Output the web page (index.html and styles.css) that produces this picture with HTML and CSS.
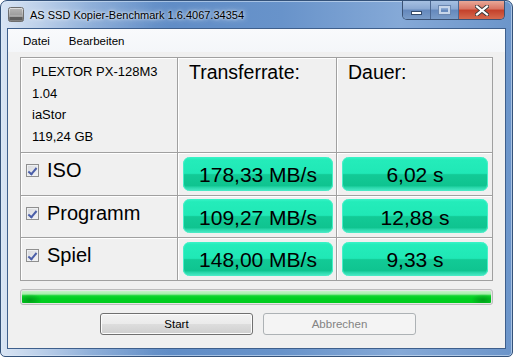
FILE: index.html
```html
<!DOCTYPE html>
<html>
<head>
<meta charset="utf-8">
<link rel="stylesheet" href="styles.css">
</head>
<body>
<div class="window">
  <div class="titlebar">
    <svg class="appicon" width="16" height="15" viewBox="0 0 16 15">
      <defs>
        <linearGradient id="hd" x1="0" y1="0" x2="0" y2="1">
          <stop offset="0" stop-color="#e4e4e4"/>
          <stop offset="0.6" stop-color="#a8a8a8"/>
          <stop offset="1" stop-color="#7a7a7a"/>
        </linearGradient>
      </defs>
      <rect x="0.5" y="0.5" width="15" height="14" rx="2" fill="url(#hd)" stroke="#6e6e6e"/>
      <path d="M3 2v6M5 2v6M7 2v6M9 2v6M11 2v6M13 2v6" stroke="#8c8c8c" stroke-width="1"/>
      <rect x="1.5" y="10" width="13" height="3" fill="#5e5e5e"/>
    </svg>
    <span class="title">AS SSD Kopier-Benchmark 1.6.4067.34354</span>
    <div class="caption">
      <div class="cbtn cmin"><span class="gmin"></span></div>
      <div class="cbtn cmax"><span class="gmax"></span></div>
      <div class="cbtn cclose">
        <svg width="14" height="11" viewBox="0 0 14 11">
          <path d="M2 1.5 L12 9.5 M12 1.5 L2 9.5" stroke="#3a3a3a" stroke-width="4" stroke-linecap="square"/>
          <path d="M2 1.5 L12 9.5 M12 1.5 L2 9.5" stroke="#ffffff" stroke-width="2.2" stroke-linecap="square"/>
        </svg>
      </div>
    </div>
  </div>
  <div class="client">
    <div class="menubar">
      <span class="menuitem">Datei</span>
      <span class="menuitem">Bearbeiten</span>
    </div>
    <div class="grid">
      <div class="cell info">
        <div>PLEXTOR PX-128M3</div>
        <div>1.04</div>
        <div>iaStor</div>
        <div>119,24 GB</div>
      </div>
      <div class="cell head">Transferrate:</div>
      <div class="cell head">Dauer:</div>

      <div class="cell label"><span class="cb"></span><span>ISO</span></div>
      <div class="cell val"><div class="pill">178,33 MB/s</div></div>
      <div class="cell val last"><div class="pill">6,02 s</div></div>

      <div class="cell label"><span class="cb"></span><span>Programm</span></div>
      <div class="cell val"><div class="pill">109,27 MB/s</div></div>
      <div class="cell val last"><div class="pill">12,88 s</div></div>

      <div class="cell label"><span class="cb"></span><span>Spiel</span></div>
      <div class="cell val"><div class="pill">148,00 MB/s</div></div>
      <div class="cell val last"><div class="pill">9,33 s</div></div>
    </div>
    <div class="progress"><div class="fill"></div></div>
    <div class="buttons">
      <div class="btn">Start</div>
      <div class="btn disabled">Abbrechen</div>
    </div>
  </div>
</div>
</body>
</html>
```
FILE: styles.css
```css
* { box-sizing: border-box; }
html, body { margin: 0; padding: 0; background: #ffffff; }
body { font-family: "Liberation Sans", Arial, sans-serif; }

.window {
  width: 513px;
  height: 357px;
  border: 1px solid #34527a;
  border-radius: 7px 7px 5px 5px;
  padding: 0 6px 7px 6px;
  display: flex;
  flex-direction: column;
  background:
    linear-gradient(to right, rgba(255,255,255,0.65) 0, rgba(255,255,255,0.2) 90px, rgba(255,255,255,0) 170px),
    linear-gradient(to right, #90b2de 0%, #5f8cc6 30%, #6893ca 55%, #85a9d7 78%, #6c95ca 100%);
  box-shadow: inset 0 0 0 1px rgba(220,235,250,0.55);
}

.titlebar {
  height: 27px;
  display: flex;
  align-items: center;
  position: relative;
}
.appicon { margin-left: 1px; flex: none; }
.title {
  margin-left: 6px;
  font-size: 11px;
  color: #000;
  text-shadow: 0 0 6px rgba(255,255,255,0.9), 0 0 3px rgba(255,255,255,0.9);
  white-space: nowrap;
}
.caption {
  position: absolute;
  right: 1px;
  top: 0;
  display: flex;
  height: 19px;
  border: 1px solid #3b5274;
  border-top: none;
  border-radius: 0 0 5px 5px;
  overflow: hidden;
}
.cbtn {
  height: 100%;
  display: flex;
  align-items: center;
  justify-content: center;
}
.cmin, .cmax {
  width: 28px;
  background: linear-gradient(to bottom, #a6c0e2 0%, #8aa8d2 45%, #6488bc 50%, #7a9cc8 100%);
  border-right: 1px solid #4c6892;
}
.cclose {
  width: 45px;
  background: linear-gradient(to bottom, #e8a898 0%, #d87462 45%, #c4402a 50%, #d66a4e 100%);
}
.gmin {
  width: 11px;
  height: 4px;
  margin-top: 5px;
  background: #fff;
  border: 1px solid #334a6a;
}
.gmax {
  width: 11px;
  height: 8px;
  border: 2px solid #c7d6ea;
  box-shadow: 0 0 0 1px #6b87b0;
}

.client {
  flex: 1;
  border: 1px solid #3e5f8c;
  background: #f0f0f0;
  display: flex;
  flex-direction: column;
}
.menubar {
  height: 23px;
  display: flex;
  align-items: center;
  padding-left: 15px;
  background: linear-gradient(to bottom, #f9fafc 0%, #f4f6f9 100%);
  font-size: 11.5px;
  color: #000;
}
.menuitem { margin-right: 19px; }

.grid {
  margin: 5px 12px 0 12px;
  display: grid;
  grid-template-columns: 157px 159px 156px;
  grid-template-rows: 95px 43px 42px 43px;
  border-top: 1px solid #a0a0a0;
  border-left: 1px solid #a0a0a0;
}
.cell {
  border-right: 1px solid #a0a0a0;
  border-bottom: 1px solid #a0a0a0;
  box-shadow: inset 1px 1px 0 #ffffff;
}
.info {
  padding: 3px 0 0 11px;
  font-size: 13px;
  line-height: 21.5px;
  color: #000;
}
.head {
  padding: 3px 0 0 11px;
  font-size: 19.5px;
  color: #000;
}
.label {
  display: flex;
  align-items: center;
  padding: 0 0 7px 5px;
  font-size: 20px;
  color: #000;
}
.cb {
  width: 13px;
  height: 13px;
  margin-right: 8px;
  border: 1px solid #8f8f8f;
  background: linear-gradient(135deg, #d6d8dc 0%, #f4f4f6 100%);
  box-shadow: inset 0 0 0 1px #eef0f2;
  position: relative;
}
.cb::after {
  content: "";
  position: absolute;
  left: 3px;
  top: 1px;
  width: 3px;
  height: 7px;
  border-right: 2px solid #4a5ea8;
  border-bottom: 2px solid #4a5ea8;
  transform: rotate(40deg);
}
.val {
  display: flex;
  align-items: center;
  padding: 0 3px 1px 5px;
}
.val.last { padding-right: 4px; }
.pill {
  width: 100%;
  height: 34px;
  border-radius: 7px;
  display: flex;
  align-items: center;
  justify-content: center;
  padding-top: 3px;
  font-size: 21px;
  color: #000;
  background: linear-gradient(to bottom, #3af4c8 0%, #24ecba 8%, #20e8b6 48%, #12ca96 52%, #0fc490 84%, #2ad8ac 90%, #4eecc8 100%);
  box-shadow: inset 1px 0 0 #46f0c8, inset -1px 0 0 #46f0c8;
}

.progress {
  margin: 8px 12px 0 12px;
  height: 16px;
  border: 1px solid #bcbcbc;
  border-radius: 3px;
  background: #e6e6e6;
  padding: 1px;
}
.fill {
  height: 100%;
  border-radius: 1px;
  background:
    radial-gradient(ellipse 12px 6px at 8px 9px, rgba(0,110,20,0.5), rgba(0,110,20,0) 100%),
    radial-gradient(ellipse 12px 6px at calc(100% - 8px) 9px, rgba(0,110,20,0.5), rgba(0,110,20,0) 100%),
    linear-gradient(to bottom, #c6f2c6 0%, #a8eeac 25%, #14d430 40%, #00d020 60%, #00cc1e 100%);
}

.buttons {
  margin-top: 8px;
  display: flex;
  gap: 10px;
  padding-left: 92px;
}
.btn {
  width: 153px;
  height: 22px;
  border: 1px solid #707070;
  border-radius: 3px;
  background: linear-gradient(to bottom, #f2f2f2 0%, #ebebeb 48%, #dddddd 52%, #cfcfcf 100%);
  box-shadow: inset 0 0 0 1px #fcfcfc;
  display: flex;
  align-items: center;
  justify-content: center;
  font-size: 11.5px;
  color: #000;
}
.btn.disabled {
  border-color: #adb2b5;
  background: #f4f4f4;
  box-shadow: none;
  color: #838383;
}
```
